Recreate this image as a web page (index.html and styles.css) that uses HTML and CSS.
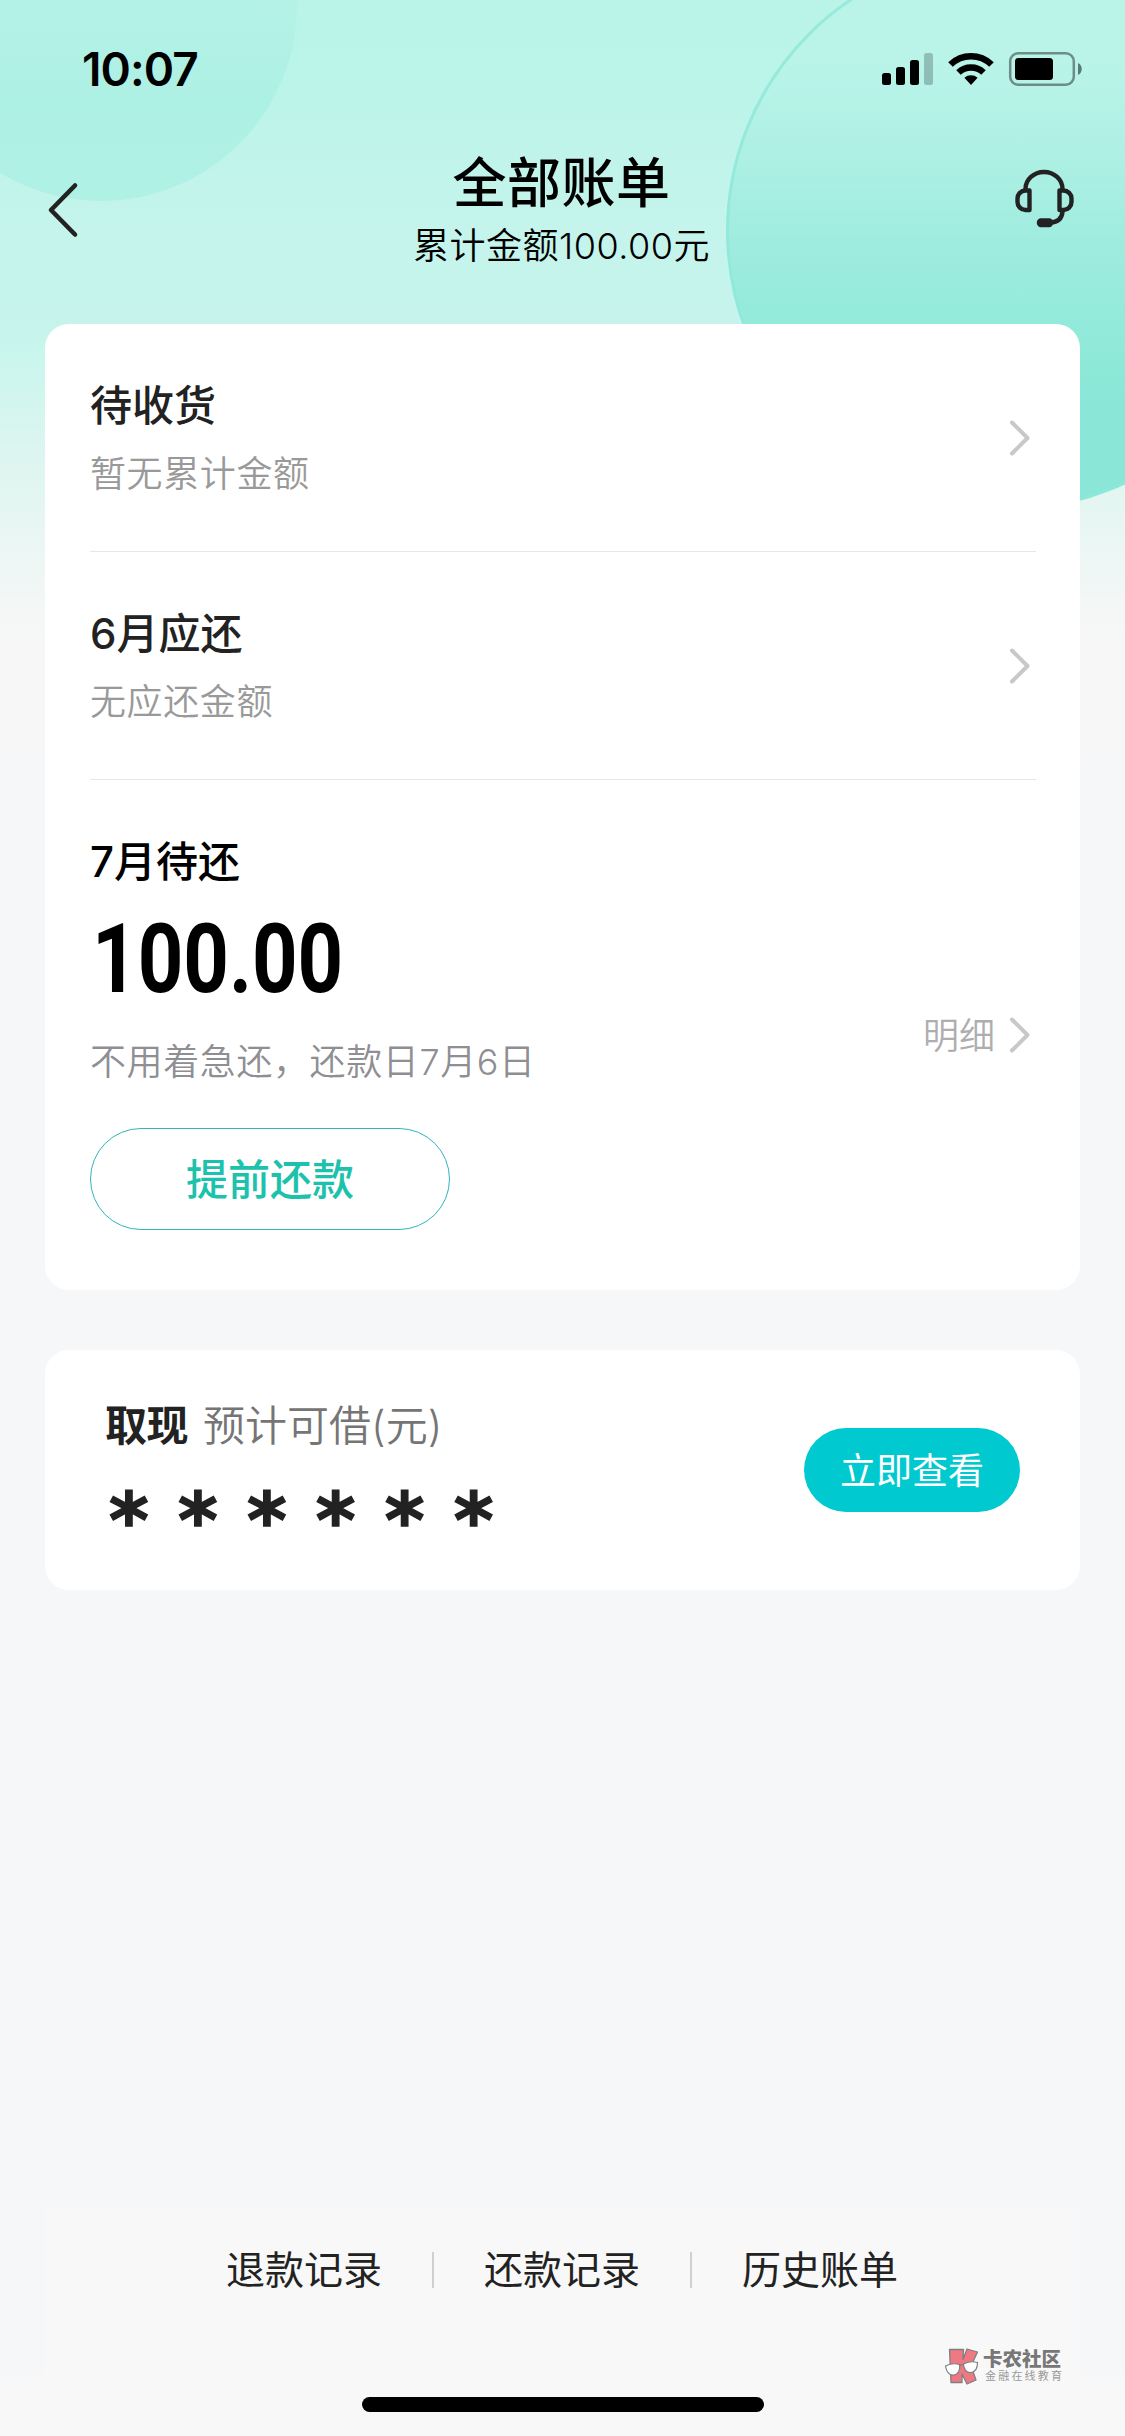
FILE: index.html
```html
<!DOCTYPE html>
<html lang="zh-CN">
<head>
<meta charset="utf-8">
<title>全部账单</title>
<link rel="stylesheet" href="styles.css">
</head>
<body>
<div class="page">
  <svg class="backdrop" width="1125" height="520" viewBox="0 0 1125 520" aria-hidden="true">
    <defs>
      <linearGradient id="big" gradientUnits="userSpaceOnUse" x1="0" y1="60" x2="0" y2="400">
        <stop offset="0" stop-color="#baf4e9"/>
        <stop offset=".26" stop-color="#aff0e4"/>
        <stop offset=".55" stop-color="#9eecdf"/>
        <stop offset=".78" stop-color="#92eada"/>
        <stop offset="1" stop-color="#8ae7d7"/>
      </linearGradient>
      <linearGradient id="small" x1="0" y1="0" x2="0" y2="1">
        <stop offset=".5" stop-color="#b4f2e7"/>
        <stop offset=".75" stop-color="#adf0e4"/>
        <stop offset="1" stop-color="#b0f1e5"/>
      </linearGradient>
      <linearGradient id="ring" gradientUnits="userSpaceOnUse" x1="0" y1="0" x2="0" y2="500">
        <stop offset="0" stop-color="#97eadc"/>
        <stop offset="1" stop-color="#8ce8d9"/>
      </linearGradient>
    </defs>
    <circle cx="101" cy="5" r="196" fill="url(#small)"/>
    <circle cx="1006" cy="231" r="278.5" fill="url(#big)" stroke="url(#ring)" stroke-width="3"/>
  </svg>

  <div class="status">
    <span class="clock">10:07</span>
    <svg class="status-icons" width="202" height="36" viewBox="881 51 202 36">
      <rect x="882" y="73" width="9" height="12" rx="2.5"/>
      <rect x="896" y="67" width="9" height="18" rx="2.5"/>
      <rect x="910" y="60" width="9" height="25" rx="2.5"/>
      <rect x="924" y="53" width="9" height="32" rx="2.5" opacity=".22"/>
      <g fill="none" stroke="#000">
        <path d="M950.5 64.5a29.5 29.5 0 0 1 41 0" stroke-width="6.6"/>
        <path d="M958.5 72.5a18 18 0 0 1 25 0" stroke-width="6.4"/>
      </g>
      <path d="M971 85l-6.6-7.2a10 10 0 0 1 13.2 0z"/>
      <rect x="1010.2" y="53.2" width="63.6" height="31.6" rx="8" fill="none" stroke="#000" stroke-opacity=".42" stroke-width="2.5"/>
      <rect x="1015" y="58" width="38" height="22" rx="3.5"/>
      <path d="M1078 63c5 2 5 10 0 12z" opacity=".5"/>
    </svg>
  </div>

  <header class="header">
    <svg class="back" width="32" height="58" viewBox="47 181 32 58"><path d="M75 185.500L51 210l24 24.500" /></svg>
    <div class="heading">
      <h1>全部账单</h1>
      <p>累计金额100.00元</p>
    </div>
    <svg class="service" width="60" height="60" viewBox="1014 169 60 60">
      <path d="M1025.500 190v-1a18.500 17 0 0 1 37 0v1"/>
      <path d="M1029.500 190.500h-4a8 8 0 0 0-8 8v3.500a8 8 0 0 0 8 8h4z"/>
      <path d="M1059.500 190.500h4a8 8 0 0 1 8 8v3.500a8 8 0 0 1-8 8h-4z"/>
      <path d="M1062.500 210v2q-1 10-12 10.500"/>
      <rect x="1039" y="220.500" width="12" height="4.500" rx="2"/>
    </svg>
  </header>

  <main class="content">
    <section class="card bills">
      <div class="bill">
        <div><h2>待收货</h2><p>暂无累计金额</p></div>
        <svg class="chevron" width="22" height="38" viewBox="0 0 22 38"><path d="M3 3.500L18.500 19 3 34.500"/></svg>
      </div>
      <div class="bill">
        <div><h2>6月应还</h2><p>无应还金额</p></div>
        <svg class="chevron" width="22" height="38" viewBox="0 0 22 38"><path d="M3 3.500L18.500 19 3 34.500"/></svg>
      </div>
      <div class="bill next">
        <div>
          <h2>7月待还</h2>
          <div class="amount">100.00</div>
          <p>不用着急还，还款日7月6日</p>
          <button class="repay">提前还款</button>
        </div>
        <div class="detail"><span>明细</span>
          <svg class="chevron" width="22" height="38" viewBox="0 0 22 38"><path d="M3 3.500L18.500 19 3 34.500"/></svg>
        </div>
      </div>
    </section>

    <section class="card cash">
      <div>
        <div class="cash-title"><strong>取现</strong><span>预计可借(元)</span></div>
        <div class="stars">******</div>
      </div>
      <button class="view">立即查看</button>
    </section>
  </main>

  <footer class="footer">
    <nav class="links"><a>退款记录</a><i></i><a>还款记录</a><i></i><a>历史账单</a></nav>
    <div class="home-area"><div class="home-bar"></div></div>
    <div class="brand">
      <svg width="36" height="37" viewBox="0 0 36 37">
        <g fill="#ef7982" stroke="#7f7f7f" stroke-width="1.300" stroke-linejoin="round">
          <path d="M5.500 1.500h14l-.500 10L23 1l10.500 3-6.500 14 5 14-9 4-5-10v8.500H7z"/>
        </g>
        <g fill="#fff" stroke="#7f7f7f" stroke-width="1.200">
          <path d="M1.500 18q7-3.500 14-1.500c1 5-1 10-6 10.500s-7-3-8-9z"/>
          <path d="M19.500 16q7-3.500 14-1.500c0 6-2 9.500-6.500 10s-7.500-3-7.500-8.500z"/>
          <path d="M15.500 18q2-2 4-1" fill="none"/>
        </g>
      </svg>
      <div><b>卡农社区</b><small>金融在线教育</small></div>
    </div>
  </footer>
</div>
</body>
</html>
```

FILE: styles.css
```css
* { box-sizing: border-box; margin: 0; padding: 0; }
body {
  width: 1125px;
  font-family: Inter, "Noto Sans CJK SC", sans-serif;
  color: #222;
  background: #f5f7f9;
}
h1, h2 { font-weight: 500; }
button { font: inherit; }
svg { display: block; flex: none; }

.page {
  position: relative;
  z-index: 0;
  display: flex;
  flex-direction: column;
  height: 2436px;
  overflow: hidden;
  background: linear-gradient(#baf4e8 0, #bbf4e9 80px, #c4f4eb 220px, #c6f4ec 320px, #c8f6ed 350px,
    #daf5ef 440px, #e7f6f3 520px, #f3f7f6 600px, #f7f7f7 640px, #f7f7f8 740px, #f5f7f9 800px);
}
.backdrop { position: absolute; left: 0; top: 0; z-index: -1; }

.status {
  display: flex;
  justify-content: space-between;
  align-items: center;
  height: 138px;
  padding: 0 42px 0 82px;
}
.clock { font-size: 46px; font-weight: 600; line-height: 46px; color: #000; letter-spacing: -.9px; }

.header {
  display: flex;
  justify-content: space-between;
  height: 186px;
  padding: 0 51px 0 47px;
  color: #000;
}
.back { margin-top: 43px; }
.back path, .chevron path { fill: none; stroke: #222; stroke-width: 4.6; stroke-linecap: round; stroke-linejoin: round; }
.heading { text-align: center; padding-left: 30px; }
.heading h1 { margin-top: 13px; font-size: 54px; line-height: 66px; letter-spacing: .5px; }
.heading p { font-size: 36px; line-height: 58px; letter-spacing: .5px; font-weight: 350; }
.service { margin-top: 31px; fill: none; stroke: #222; stroke-width: 4.4; stroke-linejoin: round; }
.service rect { fill: #222; }

.content { display: flex; flex-direction: column; gap: 60px; padding: 0 45px; }
.card { border-radius: 24px; background: #fff; }
.bills { height: 966px; padding: 0 44px 0 45px; }
.bill {
  display: flex;
  justify-content: space-between;
  align-items: center;
  height: 228px;
  padding-right: 5px;
  border-bottom: 1px solid #e6e6e6;
}
.bill h2 { padding-top: 2px; font-size: 42px; line-height: 60px; }
.bill p { margin-top: 10px; font-size: 36px; line-height: 56px; letter-spacing: .6px; color: #999; font-weight: 350; }
.chevron path { stroke: #c8c8c8; stroke-width: 4; }

.next { height: 510px; border: 0; align-items: flex-start; padding-top: 52px; }
.next h2 { padding-top: 0; color: #000; }
.amount {
  height: 92px;
  margin: 21px 0 0 2px;
  font-family: Roboto, sans-serif;
  font-size: 97px;
  font-weight: 700;
  line-height: 92px;
  color: #000;
  transform: scaleX(.82);
  transform-origin: 0 0;
}
.next p { margin-top: 27px; line-height: 60px; color: #8e8e93; }
.repay {
  display: block;
  width: 360px;
  height: 102px;
  margin-top: 36px;
  padding-bottom: 5px;
  border: 1px solid #30b5b8;
  border-radius: 51px;
  background: none;
  color: #1dc2ac;
  font-size: 42px;
  font-weight: 500;
}
.detail { display: flex; align-items: center; gap: 14px; margin-top: 176px; height: 54px; font-size: 36px; color: #aeaeb0; font-weight: 350; }
.detail span { padding-bottom: 5px; }

.cash { display: flex; justify-content: space-between; align-items: center; height: 240px; padding: 0 60px; }
.cash-title { display: flex; gap: 15px; margin-top: -2px; font-size: 42px; line-height: 60px; color: #757575; font-weight: 350; }
.cash-title strong { font-weight: 600; color: #222; letter-spacing: -.5px; }
.stars {
  height: 86px;
  padding-left: 4px;
  font-family: "DejaVu Sans", sans-serif;
  font-weight: 700;
  font-size: 76px;
  line-height: 129px;
  letter-spacing: 29.2px;
  -webkit-text-stroke: 1.500px #222;
}
.view { width: 216px; height: 84px; padding-bottom: 4px; border: 0; border-radius: 42px; background: #00cacf; color: #fff; font-size: 36px; font-weight: 400; }

.footer { position: relative; margin-top: auto; height: 228px; }
.links {
  display: flex;
  justify-content: center;
  align-items: center;
  gap: 50px;
  height: 167px;
  margin: 0 45px;
  padding: 0 1px 43px 0;
  background: #f8f8f8;
  font-size: 39px;
}
.links a { padding-bottom: 7px; }
.links i { width: 2px; height: 36px; background: #d0d0d0; }
.home-area { height: 61px; padding-top: 22px; background: #f8f8f8; }
.home-bar { width: 402px; height: 15px; margin: 0 auto; border-radius: 8px; background: #000; }
.brand { position: absolute; left: 944px; top: 140px; display: flex; gap: 3px; color: #777; }
.brand b { display: block; margin-top: 1px; font-size: 19.500px; line-height: 20px; font-weight: 900; }
.brand small { display: block; margin: 1px 0 0 2px; font-size: 11px; line-height: 13px; letter-spacing: 2.200px; color: #999; }
```
